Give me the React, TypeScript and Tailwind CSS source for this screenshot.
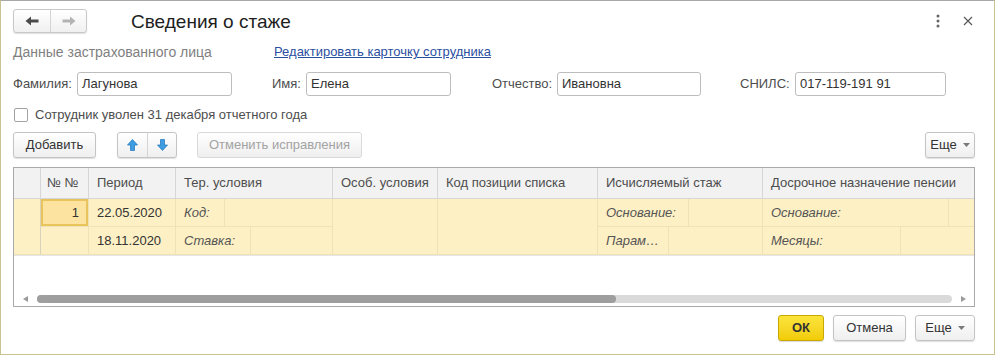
import React from "react";

const btn =
  "flex items-center justify-center rounded-[3px] border border-[#c4c4c4] bg-linear-to-b from-white to-[#efefef] shadow-[0_1px_1px_rgba(0,0,0,0.13)] text-[#333]";

const Caret = () => (
  <svg width="7" height="4" viewBox="0 0 7 4" className="ml-[6px]">
    <path d="M0 0 H7 L3.5 4 Z" fill="#7a7a7a" />
  </svg>
);

const BlueArrow = ({ down }: { down?: boolean }) => (
  <svg
    width="11"
    height="12"
    viewBox="0 0 11 12"
    className={down ? "rotate-180" : ""}
  >
    <path
      d="M5.5 0.5 L10.5 6 H7.5 V11.5 H3.5 V6 H0.5 Z"
      fill="#3d9de0"
      stroke="#2b7cc0"
      strokeWidth="0.8"
    />
  </svg>
);

const NavArrow = ({ color, right }: { color: string; right?: boolean }) => (
  <svg
    width="14"
    height="10"
    viewBox="0 0 14 10"
    className={right ? "rotate-180" : ""}
  >
    <path d="M0.5 5 L6 0.5 V3.5 H13.5 V6.5 H6 V9.5 Z" fill={color} />
  </svg>
);

const Field = ({
  label,
  labelW,
  inputW,
  value,
  ml,
}: {
  label: string;
  labelW: string;
  inputW: string;
  value: string;
  ml: string;
}) => (
  <div className={`flex items-center ${ml}`}>
    <span className={`${labelW} text-[#4d4d4d]`}>{label}</span>
    <div
      className={`${inputW} h-[24px] rounded-[3px] border border-[#bdbdbd] px-[4px] flex items-center text-[#333]`}
    >
      {value}
    </div>
  </div>
);

const cell = "border-r border-b border-[#efe2b4] flex items-center";
const lbl = "italic text-[#555] px-[8px]";

export default function App() {
  return (
    <div className="w-[996px] h-[355px] bg-white font-['Liberation_Sans',Arial,sans-serif] text-[13px] text-[#333]">
      <div className="w-[995px] h-[355px] border border-[#c9c48f] border-t-[#a8a8a8] pl-[12px] pr-[19px] pt-[8px] flex flex-col">
        {/* header */}
        <div className="flex items-center h-[24px]">
          <div className="flex w-[74px] h-[24px] rounded-[3px] border border-[#c8c8c8] bg-linear-to-b from-white to-[#f0f0f0] shadow-[0_1px_1px_rgba(0,0,0,0.12)]">
            <div className="w-[37px] flex items-center justify-center border-r border-[#d4d4d4]">
              <NavArrow color="#4a4a4a" />
            </div>
            <div className="flex-1 flex items-center justify-center">
              <NavArrow color="#b3b3b3" right />
            </div>
          </div>
          <h1 className="ml-[44px] mt-[2px] text-[19px] text-[#1e1e1e]">
            Сведения о стаже
          </h1>
          <div className="ml-auto mr-[1px] flex items-center gap-[18px]">
            <svg width="12" height="14" viewBox="0 0 12 14">
              <circle cx="6" cy="2" r="1.5" fill="#666" />
              <circle cx="6" cy="7" r="1.5" fill="#666" />
              <circle cx="6" cy="12" r="1.5" fill="#666" />
            </svg>
            <svg width="12" height="12" viewBox="0 0 12 12">
              <path
                d="M2 2 L10 10 M10 2 L2 10"
                stroke="#555"
                strokeWidth="1.1"
              />
            </svg>
          </div>
        </div>

        {/* group title */}
        <div className="mt-[11px] flex items-center h-[16px]">
          <span className="w-[261px] text-[14px] text-[#7f7f7f]">
            Данные застрахованного лица
          </span>
          <span className="text-[#2b4f9f] underline">
            Редактировать карточку сотрудника
          </span>
        </div>

        {/* fields */}
        <div className="mt-[12px] flex items-center h-[24px]">
          <Field
            label="Фамилия:"
            labelW="w-[64px]"
            inputW="w-[155px]"
            value="Лагунова"
            ml=""
          />
          <Field
            label="Имя:"
            labelW="w-[34px]"
            inputW="w-[145px]"
            value="Елена"
            ml="ml-[40px]"
          />
          <Field
            label="Отчество:"
            labelW="w-[65px]"
            inputW="w-[144px]"
            value="Ивановна"
            ml="ml-[41px]"
          />
          <Field
            label="СНИЛС:"
            labelW="w-[55px]"
            inputW="w-[151px]"
            value="017-119-191 91"
            ml="ml-[39px]"
          />
        </div>

        {/* checkbox */}
        <div className="mt-[12px] flex items-center h-[14px]">
          <div className="ml-[1px] w-[14px] h-[14px] rounded-[2px] border border-[#a3a3a3] bg-white" />
          <span className="ml-[7px] text-[#4d4d4d]">
            Сотрудник уволен 31 декабря отчетного года
          </span>
        </div>

        {/* command bar */}
        <div className="mt-[10px] flex h-[26px]">
          <button className={`${btn} w-[83px]`}>Добавить</button>
          <div className={`${btn} ml-[21px] w-[60px]`}>
            <div className="w-[30px] h-full flex items-center justify-center border-r border-[#d4d4d4]">
              <BlueArrow />
            </div>
            <div className="flex-1 h-full flex items-center justify-center">
              <BlueArrow down />
            </div>
          </div>
          <button
            className={`${btn} ml-[20px] w-[165px] border-[#d9d9d9] text-[#a3a3a3] shadow-none`}
          >
            Отменить исправления
          </button>
          <button className={`${btn} ml-auto w-[50px]`}>
            Еще
            <Caret />
          </button>
        </div>

        {/* table */}
        <div className="mt-[9px] border border-[#a9a9a9] flex flex-col">
          <div className="h-[31px] bg-[#f2f2f2] border-b border-[#d6d6d6] flex text-[#4d4d4d]">
            <div className="w-[27px] border-r border-[#d6d6d6]" />
            <div className="w-[48px] border-r border-[#d6d6d6] flex items-center px-[6px]">
              № №
            </div>
            <div className="w-[87px] border-r border-[#d6d6d6] flex items-center px-[8px]">
              Период
            </div>
            <div className="w-[157px] border-r border-[#d6d6d6] flex items-center px-[8px]">
              Тер. условия
            </div>
            <div className="w-[105px] border-r border-[#d6d6d6] flex items-center px-[8px]">
              Особ. условия
            </div>
            <div className="w-[160px] border-r border-[#d6d6d6] flex items-center px-[8px]">
              Код позиции списка
            </div>
            <div className="w-[165px] border-r border-[#d6d6d6] flex items-center px-[8px]">
              Исчисляемый стаж
            </div>
            <div className="flex-1 flex items-center px-[8px] whitespace-nowrap overflow-hidden">
              Досрочное назначение пенсии
            </div>
          </div>

          <div className="grid grid-cols-[27px_48px_87px_157px_105px_160px_165px_1fr] grid-rows-[28px_28px] bg-[#fdf0c4]">
            <div className={`${cell} row-span-2 border-r-[#d9d3bb]`} />
            <div className={`${cell} p-0`}>
              <div className="w-full h-full border-2 border-[#e9c35c] bg-[#fce3a0] flex items-center justify-end pr-[7px]">
                1
              </div>
            </div>
            <div className={`${cell} px-[8px]`}>22.05.2020</div>
            <div className={cell}>
              <div className={`${lbl} w-[49px] h-full flex items-center border-r border-[#efe2b4]`}>
                Код:
              </div>
            </div>
            <div className={`${cell} row-span-2`} />
            <div className={`${cell} row-span-2`} />
            <div className={cell}>
              <div className={`${lbl} w-[91px] h-full flex items-center border-r border-[#efe2b4]`}>
                Основание:
              </div>
            </div>
            <div className={`${cell} border-r-0`}>
              <div className={`${lbl} w-[186px] h-full flex items-center border-r border-[#efe2b4]`}>
                Основание:
              </div>
            </div>

            <div className={cell} />
            <div className={`${cell} px-[8px]`}>18.11.2020</div>
            <div className={cell}>
              <div className={`${lbl} w-[75px] h-full flex items-center border-r border-[#efe2b4]`}>
                Ставка:
              </div>
            </div>
            <div className={cell}>
              <div className={`${lbl} w-[71px] h-full flex items-center border-r border-[#efe2b4]`}>
                Парам…
              </div>
            </div>
            <div className={`${cell} border-r-0`}>
              <div className={`${lbl} w-[138px] h-full flex items-center border-r border-[#efe2b4]`}>
                Месяцы:
              </div>
            </div>
          </div>

          <div className="h-[36px] border-t border-[#e6e6e6]" />

          <div className="h-[15px] flex items-center pl-[9px] pr-[8px]">
            <svg width="5" height="6" viewBox="0 0 5 6">
              <path d="M5 0 V6 L0 3 Z" fill="#9a9a9a" />
            </svg>
            <div className="ml-[9px] w-[915px] h-[8px] rounded-full bg-[#dadada]">
              <div className="w-[579px] h-full rounded-full bg-[#9e9e9e]" />
            </div>
            <svg width="5" height="6" viewBox="0 0 5 6" className="ml-[9px]">
              <path d="M0 0 V6 L5 3 Z" fill="#9a9a9a" />
            </svg>
          </div>
        </div>

        {/* footer */}
        <div className="mt-[8px] flex justify-end gap-[9px] h-[26px]">
          <button className="w-[46px] flex items-center justify-center rounded-[3px] border border-[#c9a900] bg-linear-to-b from-[#fbe43a] to-[#f2cc00] shadow-[0_1px_1px_rgba(0,0,0,0.15)] text-[#333] font-bold">
            ОК
          </button>
          <button className={`${btn} w-[73px]`}>Отмена</button>
          <button className={`${btn} w-[60px]`}>
            Еще
            <Caret />
          </button>
        </div>
      </div>
    </div>
  );
}
